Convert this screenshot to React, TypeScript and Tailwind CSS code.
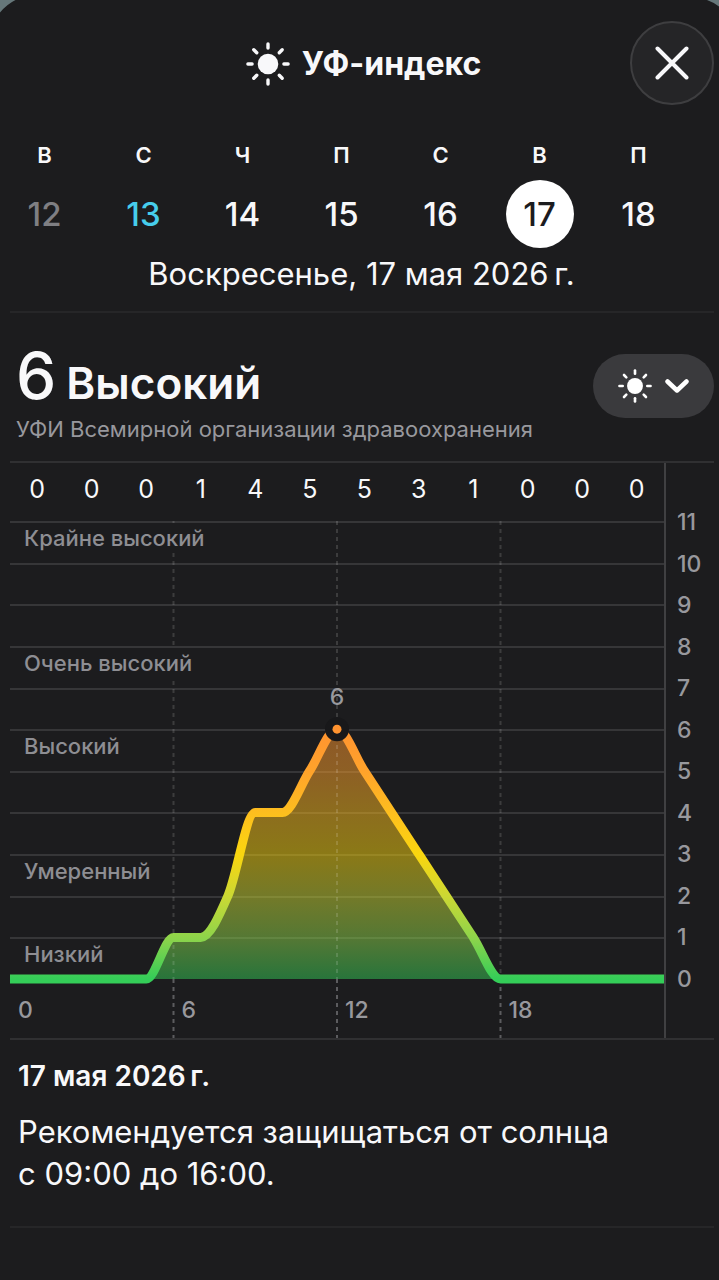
const HOURLY_UV = [0, 0, 0, 0, 0, 0, 1, 1, 2, 4, 4, 5, 6, 5, 4, 3, 2, 1, 0, 0, 0, 0, 0, 0, 0];
const SUMMARY = [0, 0, 0, 1, 4, 5, 5, 3, 1, 0, 0, 0];
const SCALE = [11, 10, 9, 8, 7, 6, 5, 4, 3, 2, 1, 0];
const HOURS = [0, 6, 12, 18];

interface Day {
  letter: string;
  date: number;
  past?: boolean;
  today?: boolean;
  selected?: boolean;
}

const DAYS: Day[] = [
  { letter: 'В', date: 12, past: true },
  { letter: 'С', date: 13, today: true },
  { letter: 'Ч', date: 14 },
  { letter: 'П', date: 15 },
  { letter: 'С', date: 16 },
  { letter: 'В', date: 17, selected: true },
  { letter: 'П', date: 18 }
];

// one entry per grid row, from 11 down to 1
const BANDS = ['Крайне высокий', '', '', 'Очень высокий', '', 'Высокий', '', '', 'Умеренный', '', 'Низкий'];

const PLOT_W = 655;
const PLOT_H = 458;
const AXIS_H = 59;
const STEP_X = PLOT_W / 24;
const STEP_Y = PLOT_H / 11;

// monotone cubic through the hourly values
function buildCurve(values: number[]) {
  const slope = values.map((v, i) => {
    if (i === 0 || i === values.length - 1) return 0;
    const a = v - values[i - 1];
    const b = values[i + 1] - v;
    if (a * b <= 0) return 0;
    return Math.sign(a) * Math.min(2 * Math.abs(a), 2 * Math.abs(b), Math.abs(a + b) / 2);
  });
  const point = (x: number, v: number) => `${(x * STEP_X).toFixed(1)} ${(PLOT_H - v * STEP_Y).toFixed(1)}`;

  let d = `M${point(0, values[0])}`;
  for (let i = 1; i < values.length; i++) {
    const c1 = point(i - 1 + 1 / 3, values[i - 1] + slope[i - 1] / 3);
    const c2 = point(i - 1 / 3, values[i] - slope[i] / 3);
    d += `C${c1} ${c2} ${point(i, values[i])}`;
  }
  return d;
}

const CURVE = buildCurve(HOURLY_UV);

function SunIcon({ className }: { className: string }) {
  return (
    <svg viewBox="0 0 44 44" className={className} aria-hidden="true">
      <circle cx="22" cy="22" r="10.3" fill="currentColor" />
      <g stroke="currentColor" strokeWidth="3.4" strokeLinecap="round">
        {[0, 45, 90, 135, 180, 225, 270, 315].map((angle) => (
          <path key={angle} d="M22 1.9v4.200" transform={`rotate(${angle} 22 22)`} />
        ))}
      </g>
    </svg>
  );
}

function Header() {
  return (
    <header className="grid grid-cols-[84px_1fr_84px] items-center pt-[21px] pr-[5px] pl-[13px]">
      <span />
      <h1 className="flex items-center justify-center gap-3 pt-0.5 text-[32px] leading-10 font-bold">
        <SunIcon className="size-11" />
        УФ-индекс
      </h1>
      <button
        aria-label="Закрыть"
        className="flex size-[84px] items-center justify-center rounded-full border-2 border-[#3e3e40] bg-[#252527]"
      >
        <svg viewBox="0 0 34 34" className="size-[34px]" fill="none" stroke="currentColor" strokeWidth="4" strokeLinecap="round">
          <path d="M2.5 2.5l29 29M31.5 2.5l-29 29" />
        </svg>
      </button>
    </header>
  );
}

function dateClass(day: Day) {
  if (day.selected) return 'bg-white text-[#1c1c1e]';
  if (day.today) return 'text-[#46cdec]';
  if (day.past) return 'text-[#7f7f83]';
  return '';
}

function WeekStrip() {
  return (
    <nav className="-ml-[5px] mt-9 grid grid-cols-7 pr-[31px]" aria-label="Дни">
      {DAYS.map((day) => (
        <button key={day.date} className="flex flex-col items-center gap-[11px]" aria-current={day.selected ? 'date' : undefined}>
          <span className="text-[22px] leading-7 font-semibold">{day.letter}</span>
          <span className={`flex size-[68px] items-center justify-center rounded-full pt-0.5 text-[33px] font-medium ${dateClass(day)}`}>
            {day.date}
          </span>
        </button>
      ))}
    </nav>
  );
}

function Plot() {
  return (
    <div className="relative border-r-2 border-[#404042]">
      <div className="grid h-[58px] grid-cols-12 items-center pb-1 text-center text-[25px]">
        {SUMMARY.map((value, i) => (
          <span key={i}>{value}</span>
        ))}
      </div>

      <div className="relative">
        <div className="grid h-[458px] grid-rows-11">
          {BANDS.map((band, i) => (
            <div key={i} className="border-t-2 border-[#363638] pl-2">
              {band && (
                <span className="relative z-10 inline-block bg-[#1c1c1e] px-1.5 text-[22px] leading-[30px] font-medium text-[#8e8e93]">
                  {band}
                </span>
              )}
            </div>
          ))}
        </div>
        <div className="grid h-[59px] grid-cols-4 items-center pt-1 text-[23px] font-medium text-[#98989d]">
          {HOURS.map((hour) => (
            <span key={hour} className="pl-2">
              {hour}
            </span>
          ))}
        </div>

        <svg
          viewBox={`0 0 ${PLOT_W} ${PLOT_H + AXIS_H}`}
          preserveAspectRatio="none"
          className="absolute inset-0 size-full"
          role="img"
          aria-label="График УФ-индекса"
        >
          <defs>
            <linearGradient id="uv" gradientUnits="userSpaceOnUse" x1="0" y1={PLOT_H - 6 * STEP_Y} x2="0" y2={PLOT_H}>
              <stop offset="0" stopColor="#ff9330" />
              <stop offset="0.17" stopColor="#ffa32b" />
              <stop offset="0.34" stopColor="#fdbf1e" />
              <stop offset="0.5" stopColor="#fad60f" />
              <stop offset="0.67" stopColor="#cbd834" />
              <stop offset="0.84" stopColor="#8cd44b" />
              <stop offset="1" stopColor="#34cd58" />
            </linearGradient>
          </defs>
          <path d={`${CURVE}Z`} fill="url(#uv)" opacity="0.5" />
          {[6, 12, 18].map((hour) => (
            <g key={hour} strokeWidth="2" strokeDasharray="4 4">
              <path d={`M${hour * STEP_X} 0V${PLOT_H}`} stroke="#ffffff" strokeOpacity="0.14" />
              <path d={`M${hour * STEP_X} ${PLOT_H}V${PLOT_H + AXIS_H}`} stroke="#5c5c5f" />
            </g>
          ))}
          <path d={CURVE} fill="none" stroke="url(#uv)" strokeWidth="9" />
          <circle cx={12 * STEP_X} cy={PLOT_H - 6 * STEP_Y} r="12" fill="#18181a" />
          <circle cx={12 * STEP_X} cy={PLOT_H - 6 * STEP_Y} r="4.5" fill="#ff9330" />
        </svg>
        <span className="absolute top-[162px] left-1/2 -translate-x-1/2 text-[23px] leading-7 font-medium text-[#98989d]">6</span>
      </div>
    </div>
  );
}

function Chart() {
  return (
    <section className="mr-[5px] ml-[10px] grid grid-cols-[1fr_48px] border-y-2 border-[#303032]">
      <Plot />
      <div className="flex flex-col justify-between pt-[45px] pb-[45px] pl-[11px] text-[23px] leading-7 font-medium text-[#98989d]">
        {SCALE.map((value) => (
          <span key={value}>{value}</span>
        ))}
      </div>
    </section>
  );
}

export default function App() {
  return (
    <div className="relative min-h-screen bg-[#1c1c1e] font-['Inter','Liberation_Sans',sans-serif] text-[#f8f8fa]">
      <svg viewBox="0 0 16 13" className="absolute top-0 left-0 h-[13px] w-4" fill="#66777a" aria-hidden="true">
        <path d="M0 0H15.5Q6.5 4.500 0 12.500Z" />
      </svg>
      <svg viewBox="0 0 12 7" className="absolute top-0 right-0 h-[7px] w-3" fill="#66777a" aria-hidden="true">
        <path d="M0 0H12V6.500Q7 2.500 0 0Z" />
      </svg>

      <Header />
      <WeekStrip />
      <p className="pt-1.5 pb-[17px] pl-1 text-center text-[31px] leading-10">Воскресенье, 17 мая 2026&#8201;г.</p>
      <hr className="mr-[5px] ml-[10px] border-t-2 border-[#262628]" />

      <section className="flex items-start justify-between pt-[31px] pr-[5px] pl-4">
        <div>
          <h2 className="flex items-baseline gap-2.5 text-[44px] leading-[64px] font-semibold">
            <span className="text-[64px] font-medium">6</span>
            Высокий
          </h2>
          <p className="pb-[18px] text-[22px] leading-7 text-[#98989d]">УФИ Всемирной организации здравоохранения</p>
        </div>
        <button
          aria-label="Выбрать показатель"
          className="mt-[10px] flex h-16 w-[121px] items-center justify-center gap-[13px] rounded-full bg-[#3a3a3d] text-white"
        >
          <SunIcon className="size-[34px]" />
          <svg viewBox="0 0 24 14" className="h-[14px] w-6" fill="none" stroke="currentColor" strokeWidth="4.500" strokeLinecap="round" strokeLinejoin="round">
            <path d="M2.500 2.500L12 11.500L21.500 2.500" />
          </svg>
        </button>
      </section>

      <Chart />

      <section className="pt-4 pr-5 pb-[31px] pl-[18px]">
        <h3 className="text-[28px] leading-10 font-semibold">17 мая 2026&#8201;г.</h3>
        <p className="pt-[15px] text-[31px] leading-[42px]">
          Рекомендуется защищаться от солнца
          <br />с 09:00 до 16:00.
        </p>
      </section>
      <hr className="mr-[5px] ml-[10px] border-t-2 border-[#262628]" />
    </div>
  );
}
